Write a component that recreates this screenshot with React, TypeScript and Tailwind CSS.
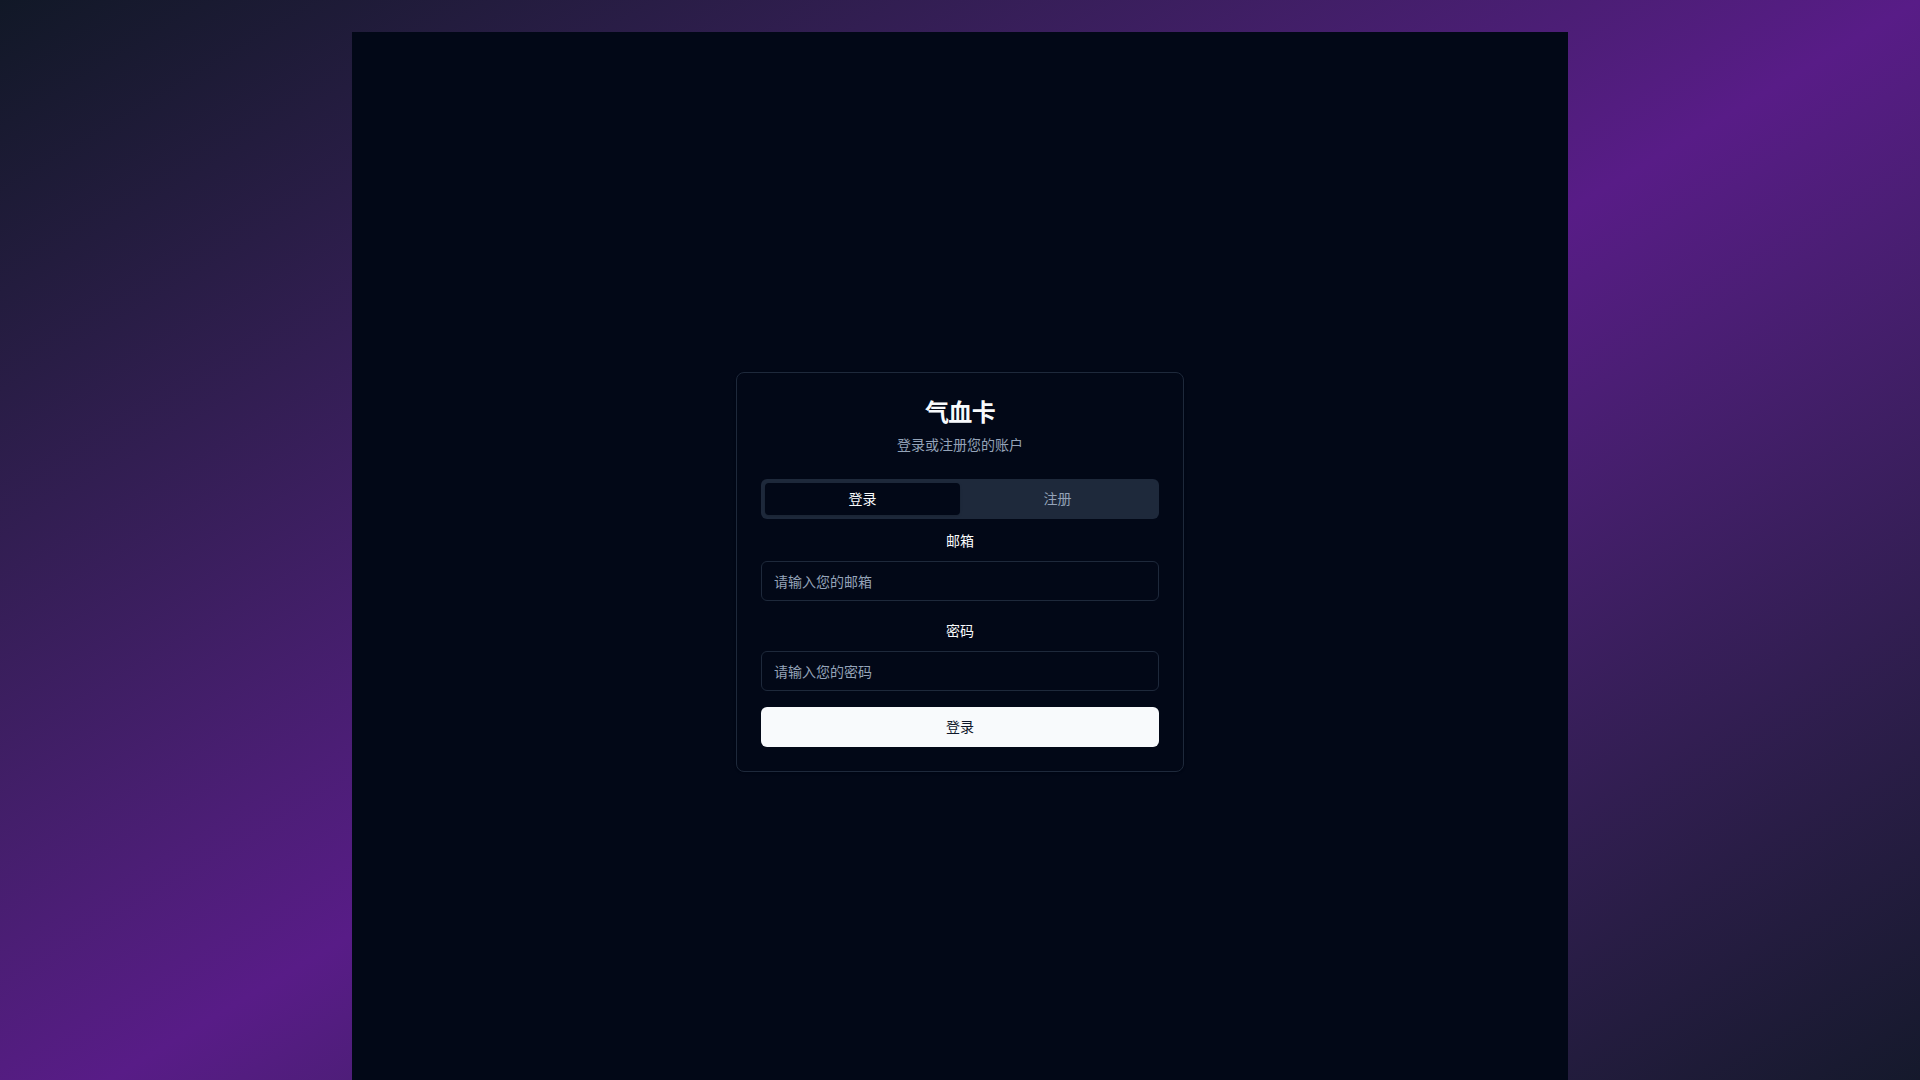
import { useState } from "react";

const font = { fontFamily: '"Inter", "Noto Sans CJK SC", sans-serif' };

export default function App() {
  const [tab, setTab] = useState<"login" | "register">("login");

  return (
    <div
      className="h-screen w-full overflow-y-auto [&::-webkit-scrollbar]:w-1.5 [&::-webkit-scrollbar-track]:bg-white [&::-webkit-scrollbar-thumb]:bg-[#a9acb8] [&::-webkit-scrollbar-thumb]:border-2 [&::-webkit-scrollbar-thumb]:border-solid [&::-webkit-scrollbar-thumb]:border-white"
      style={font}
    >
      <div className="min-h-screen w-full p-8 bg-gradient-to-br from-[#111827] via-[#581c87] to-[#111827]">
        <div className="mx-auto w-full max-w-[1216px] min-h-screen bg-[#020817] flex items-center justify-center">
          <div className="w-[448px] rounded-lg border border-[#1e293b] bg-[#020817] text-[#f8fafc] shadow-sm">
            {/* Header */}
            <div className="p-6 flex flex-col gap-1.5 text-center">
              <h1 className="text-2xl leading-8 font-semibold tracking-tight">气血卡</h1>
              <p className="text-sm leading-5 text-[#94a3b8]">登录或注册您的账户</p>
            </div>

            {/* Content */}
            <div className="px-6 pb-6">
              <div className="h-10 rounded-md bg-[#1e293b] p-1 grid grid-cols-2 text-sm">
                <button
                  onClick={() => setTab("login")}
                  className={`rounded-sm ${tab === "login" ? "bg-[#020817] text-[#f8fafc] shadow-sm" : "text-[#94a3b8]"}`}
                >
                  登录
                </button>
                <button
                  onClick={() => setTab("register")}
                  className={`rounded-sm ${tab === "register" ? "bg-[#020817] text-[#f8fafc] shadow-sm" : "text-[#94a3b8]"}`}
                >
                  注册
                </button>
              </div>

              <form className="mt-3 text-center" onSubmit={(e) => e.preventDefault()}>
                <label className="block text-sm leading-5">邮箱</label>
                <input
                  type="email"
                  placeholder="请输入您的邮箱"
                  className="mt-2.5 block w-full h-10 rounded-md border border-[#1e293b] bg-[#020817] px-3 text-sm text-[#f8fafc] placeholder:text-[#94a3b8] outline-none"
                />

                <label className="mt-5 block text-sm leading-5">密码</label>
                <input
                  type="password"
                  placeholder="请输入您的密码"
                  className="mt-2.5 block w-full h-10 rounded-md border border-[#1e293b] bg-[#020817] px-3 text-sm text-[#f8fafc] placeholder:text-[#94a3b8] outline-none"
                />

                <button
                  type="submit"
                  className="mt-4 w-full h-10 rounded-md bg-[#f8fafc] text-[#0f172a] text-sm"
                >
                  {tab === "login" ? "登录" : "注册"}
                </button>
              </form>
            </div>
          </div>
        </div>
      </div>
    </div>
  );
}
